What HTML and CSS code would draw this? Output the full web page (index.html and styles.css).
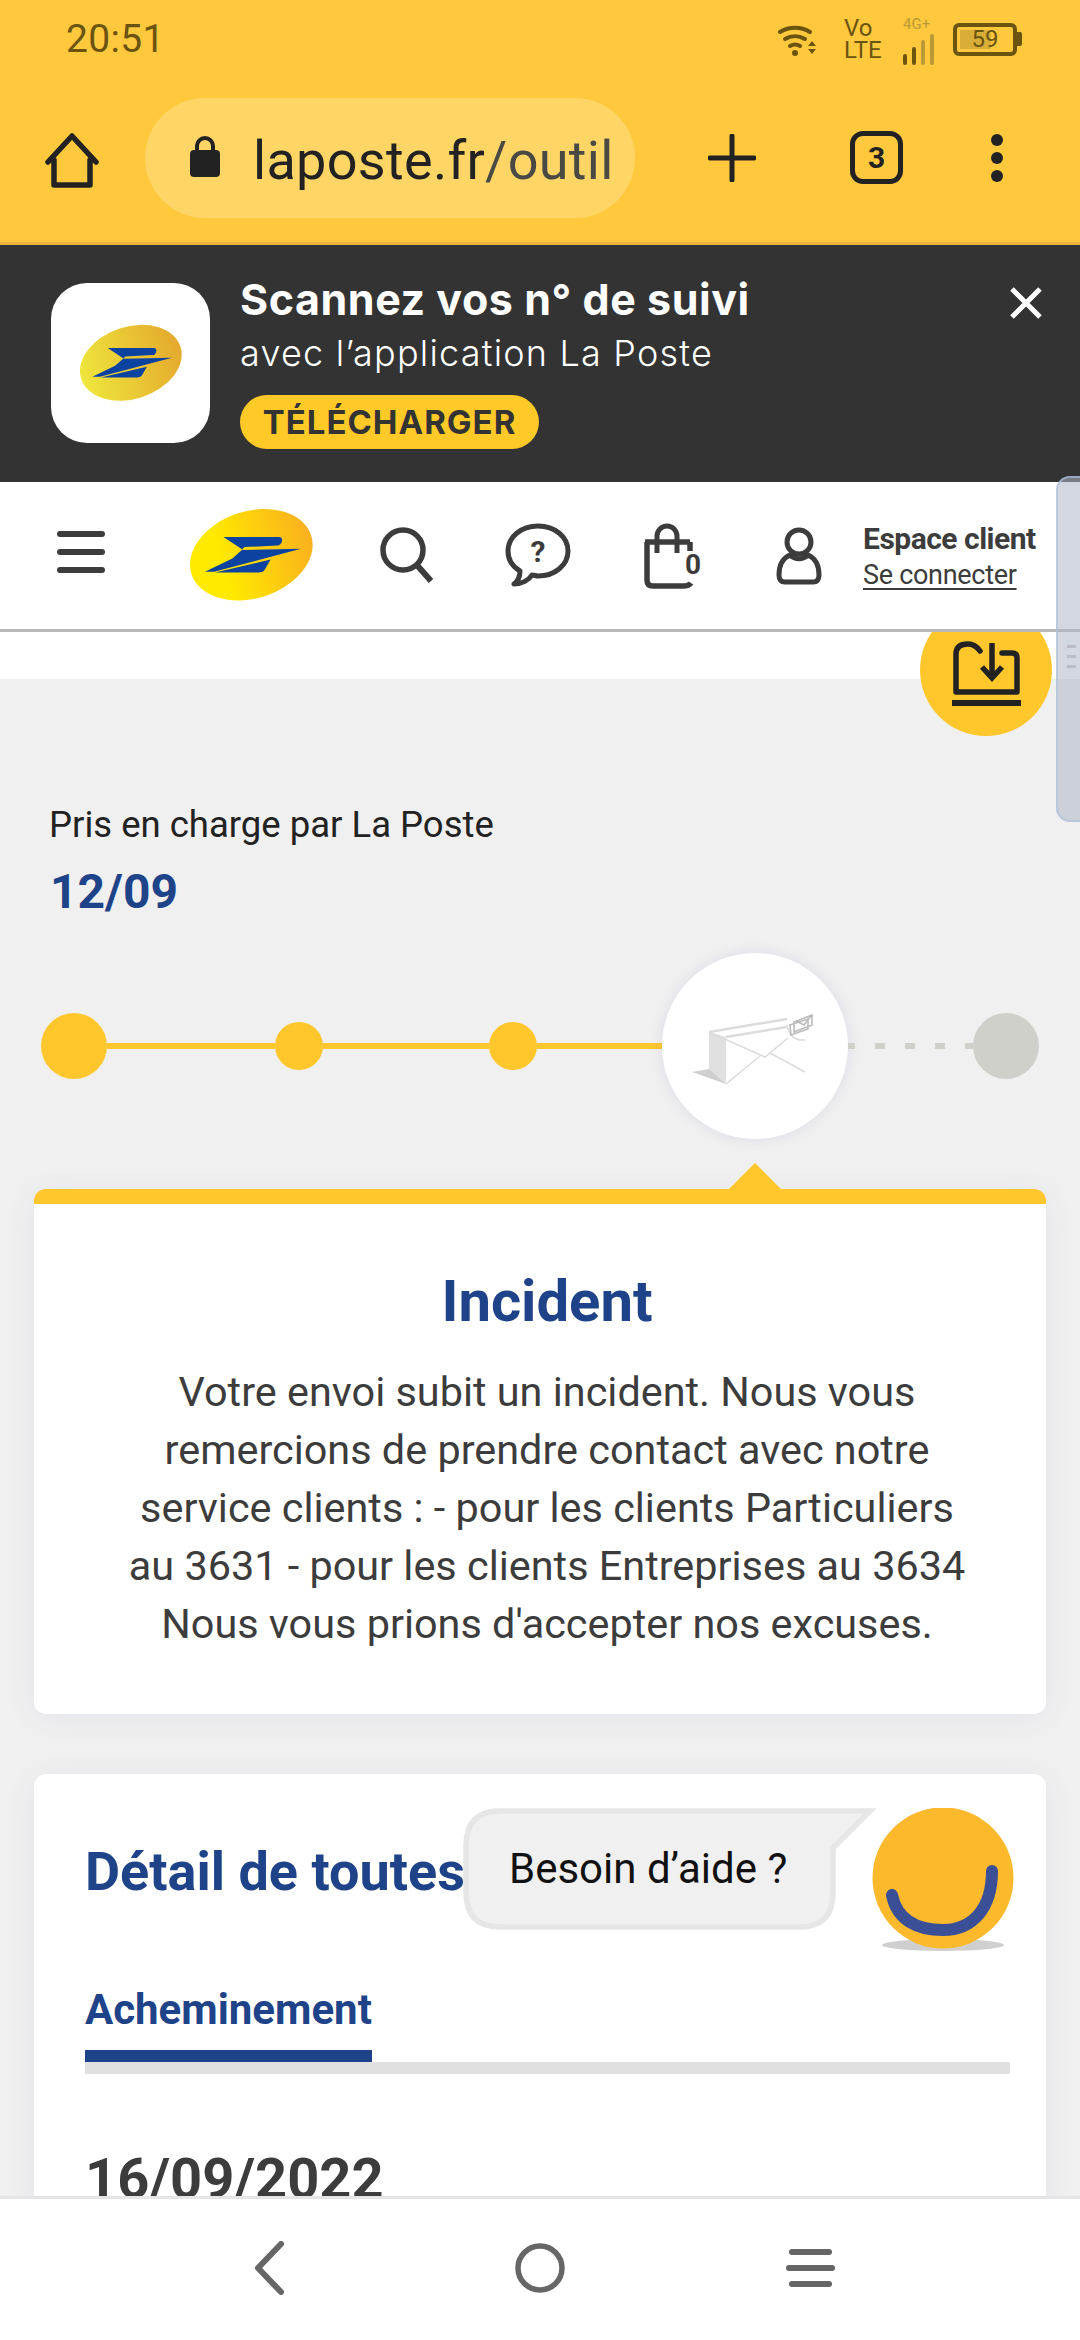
FILE: index.html
```html
<!DOCTYPE html>
<html lang="fr">
<head>
<meta charset="utf-8">
<title>La Poste</title>
<link rel="stylesheet" href="styles.css">
</head>
<body>
<svg width="0" height="0" class="defs">
  <defs>
    <linearGradient id="lg1" x1="0" y1="0" x2="1" y2="0"><stop offset="0.25" stop-color="#ffea00"/><stop offset="1" stop-color="#fab01e"/></linearGradient>
    <linearGradient id="lg2" x1="0" y1="0" x2="1" y2="0"><stop offset="0" stop-color="#efe63c"/><stop offset="1" stop-color="#e4a92e"/></linearGradient>
  </defs>
</svg>
<div class="page">
  <div class="chrome">
    <div class="status">
      <span class="time">20:51</span>
      <div class="status-icons">
        <svg class="wifi" viewBox="0 0 40 34" width="40" height="34"><g fill="none" stroke="#6b5410" stroke-width="4" stroke-linecap="round"><path d="M2 10A29 29 0 0 1 32 10"/><path d="M7 17A19 19 0 0 1 27 17"/><path d="M12 24A10 10 0 0 1 22 24"/></g><circle cx="17" cy="31" r="3" fill="#6b5410"/><path d="M30 24l4-5 4 5zM30 27h8l-4 5z" fill="#6b5410"/></svg>
        <div class="volte">Vo<br>LTE</div>
        <div class="signal"><span class="g4">4G+</span>
          <svg viewBox="0 0 32 32" width="32" height="32"><rect x="0" y="20" width="4" height="11" rx="2" fill="#6b5410"/><rect x="9" y="13" width="4" height="18" rx="2" fill="#6b5410"/><rect x="18" y="6" width="4" height="25" rx="2" fill="#b99a35"/><rect x="27" y="0" width="4" height="31" rx="2" fill="#b99a35"/></svg>
        </div>
        <div class="battery"><div class="battery-fill"></div><span class="battery-num">59</span></div><div class="battery-nub"></div>
      </div>
    </div>
    <div class="toolbar">
      <svg class="home" viewBox="0 0 60 60" width="60" height="60"><path d="M6 32L30 6L54 32M12 30V55H48V30" fill="none" stroke="#222" stroke-width="5.5" stroke-linejoin="round" stroke-linecap="round"/></svg>
      <div class="url">
        <svg viewBox="0 0 34 44" width="34" height="44"><path d="M9 17V11a8 8 0 0 1 16 0v6" fill="none" stroke="#222" stroke-width="4"/><rect x="2" y="15" width="30" height="27" rx="4" fill="#222"/></svg>
        <span class="url-text">laposte.fr<span class="url-path">/outil</span></span>
      </div>
      <svg class="plus" viewBox="0 0 48 48" width="48" height="48"><path d="M24 2V46M2 24H46" stroke="#222" stroke-width="5" stroke-linecap="round"/></svg>
      <div class="tabs">3</div>
      <div class="more"><i></i><i></i><i></i></div>
    </div>
  </div>

  <div class="banner">
    <div class="app-icon">
      <svg viewBox="0 0 102 78" width="102" height="78"><g transform="scale(.3344)"><ellipse cx="152" cy="116" rx="156" ry="108" transform="rotate(-18 152 116)" fill="url(#lg2)"/><path d="M83 72H220Q230 72 228 82Q226 93 216 93L135 97Q131 102 128 104L275 101L60 158H37L105 125L130 103Z" fill="#0c42a0"/><path d="M200 128L186 152Q182 160 170 160H62Z" fill="#0c42a0"/></g></svg>
    </div>
    <div class="banner-text">
      <div class="banner-title">Scannez vos n° de suivi</div>
      <div class="banner-sub">avec l’application La Poste</div>
      <div class="banner-btn">TÉLÉCHARGER</div>
    </div>
    <svg class="close" viewBox="0 0 34 34" width="34" height="34"><path d="M3 3L31 31M31 3L3 31" stroke="#fff" stroke-width="5"/></svg>
  </div>

  <header class="site-header">
    <div class="burger"><i></i><i></i><i></i></div>
    <svg class="logo" viewBox="0 0 123 94" width="123" height="94"><g transform="scale(.4033)"><ellipse cx="152" cy="116" rx="156" ry="108" transform="rotate(-18 152 116)" fill="url(#lg1)"/><path d="M83 72H220Q230 72 228 82Q226 93 216 93L135 97Q131 102 128 104L275 101L60 158H37L105 125L130 103Z" fill="#0c42a0"/><path d="M200 128L186 152Q182 160 170 160H62Z" fill="#0c42a0"/></g></svg>
    <svg class="ic-search" viewBox="0 0 56 56" width="56" height="56"><circle cx="25" cy="23" r="20" fill="none" stroke="#3c3c3c" stroke-width="5.5"/><path d="M38 37L53 54" stroke="#3c3c3c" stroke-width="6"/></svg>
    <svg class="ic-chat" viewBox="0 0 66 64" width="66" height="64"><path d="M33 3C16 3 3 14 3 28C3 37 8 44 15 48C15 53 13 58 9 61C17 61 24 57 27 52C29 52 31 53 33 53C50 53 63 42 63 28C63 14 50 3 33 3Z" fill="none" stroke="#3c3c3c" stroke-width="5" stroke-linejoin="round"/><text x="33" y="39" class="chat-q">?</text></svg>
    <svg class="ic-bag" viewBox="0 0 64 66" width="64" height="66"><path d="M3 19H48M5 19V57Q5 63 11 63H41Q47 63 49 60M48 19V28" fill="none" stroke="#3c3c3c" stroke-width="5.5"/><path d="M15 30V13a10 10 0 0 1 20 0V30" fill="none" stroke="#3c3c3c" stroke-width="5"/><text x="51" y="51" class="bag-n">0</text></svg>
    <svg class="ic-user" viewBox="0 0 46 58" width="46" height="58"><circle cx="23" cy="15" r="12" fill="none" stroke="#3c3c3c" stroke-width="5"/><path d="M14 28C7 31 3 38 3 48Q3 55 9 55H37Q43 55 43 48C43 38 39 31 32 28C27 33 19 33 14 28Z" fill="none" stroke="#3c3c3c" stroke-width="5" stroke-linejoin="round"/></svg>
    <div class="account">
      <div class="account-title">Espace client</div>
      <div class="account-link">Se connecter</div>
    </div>
  </header>

  <main class="main">
    <div class="white-strip"></div>
    <div class="fab">
      <svg viewBox="0 0 132 132" width="132" height="132"><path d="M60 47Q55 40 48 40Q36 40 36 50V88H97V54Q97 49 92 49H82" fill="none" stroke="#222" stroke-width="5.5" stroke-linecap="round" stroke-linejoin="round"/><path d="M72 39V74M62 63L72 74L82 63" fill="none" stroke="#222" stroke-width="5.5"/><rect x="32" y="96" width="69" height="6" fill="#222"/></svg>
    </div>
    <section class="summary">
      <div class="summary-label">Pris en charge par La Poste</div>
      <div class="summary-date">12/09</div>
      <div class="timeline">
        <span class="dot dot-lg"></span><span class="line l1"></span>
        <span class="dot"></span><span class="line l2"></span>
        <span class="dot"></span><span class="line l3"></span>
        <span class="step-current">
          <svg viewBox="0 0 186 186" width="186" height="186"><path d="M47 79L64 84V131L47 117Z" fill="#e0e0e0"/><path d="M30 119L47 116L64 131Z" fill="#cfcfcf"/><g fill="none" stroke="#dcdcdc" stroke-width="1.6"><path d="M47 79L125 66" stroke-width="2.5"/><path d="M64 84L125 74" stroke-width="2.5"/><path d="M47 79L103 104L126 85M64 131L98 103M108 100L143 119"/><path d="M125 72Q128 88 143 87"/></g><g fill="#fff" stroke="#bbb" stroke-width="1.6"><path d="M132 69L150 62V72L132 79Z"/><path d="M128 72L146 66V76L129 82Z" fill="none"/><path d="M134 68L142 72L149 63" fill="none"/></g></svg>
        </span>
        <span class="dashes"></span>
        <span class="dot dot-lg dot-off"></span>
      </div>
    </section>

    <section class="card incident">
      <h2 class="incident-title">Incident</h2>
      <p class="incident-text">Votre envoi subit un incident. Nous vous remercions de prendre contact avec notre service clients : - pour les clients Particuliers au 3631 - pour les clients Entreprises au 3634 Nous vous prions d'accepter nos excuses.</p>
    </section>

    <section class="card detail">
      <h2 class="detail-title">Détail de toutes</h2>
      <div class="tabbar"><div class="tab">Acheminement</div></div>
      <div class="detail-date">16/09/2022</div>
    </section>

    <div class="help">
      <div class="help-bubble">
        <svg viewBox="0 0 415 122" width="415" height="122"><path d="M38 3H408L371 40V84Q371 119 338 119H38Q4 119 4 84V38Q4 3 38 3Z" fill="#f0f0f0" stroke="#e6e6e6" stroke-width="5.5"/></svg>
        <span class="help-text">Besoin d’aide ?</span>
      </div>
      <svg class="smile" viewBox="0 0 142 146" width="142" height="146"><ellipse cx="71" cy="137" rx="61" ry="6" fill="#cfcfcf"/><circle cx="71" cy="70" r="70.5" fill="#fdb92c"/><path d="M20 87C25 112 45 122 71 122C101 122 120 100 120 63" fill="none" stroke="#3a4f96" stroke-width="12" stroke-linecap="round"/></svg>
    </div>
  </main>

  <nav class="nav">
    <svg viewBox="0 0 34 54" width="34" height="54"><path d="M29 3L6 27L29 51" fill="none" stroke="#666" stroke-width="6" stroke-linecap="round" stroke-linejoin="round"/></svg>
    <svg viewBox="0 0 54 54" width="54" height="54"><circle cx="27" cy="27" r="22" fill="none" stroke="#666" stroke-width="5.5"/></svg>
    <div class="nav-menu"><i></i><i></i><i></i></div>
  </nav>

  <div class="edge-handle"><i></i><i></i><i></i></div>
</div>
</body>
</html>
```
FILE: styles.css
```css
* { box-sizing: border-box; }
html, body { margin: 0; padding: 0; }
body { font-family: Roboto, "Liberation Sans", sans-serif; background: #fff; color: #3c3c3c; }
.defs { position: absolute; }
.page { position: relative; width: 1080px; height: 2340px; overflow: hidden; display: flex; flex-direction: column; }

/* browser chrome */
.chrome { height: 245px; background: #ffc83d; border-bottom: 3px solid #e8b53a; flex: none; }
.status { height: 78px; padding: 0 0 0 66px; display: flex; justify-content: space-between; align-items: center; color: #6b5410; }
.time { font-size: 39px; font-weight: 400; letter-spacing: .3px; }
.status-icons { display: flex; align-items: center; padding-right: 58px; height: 78px; }
.wifi { margin-right: 26px; }
.volte { font-size: 24px; line-height: 22px; margin-right: 19px; width: 40px; }
.signal { position: relative; width: 32px; height: 50px; padding-top: 20px; margin-right: 18px; }
.g4 { position: absolute; top: 2px; left: 0; font-size: 15px; line-height: 16px; color: #b99a35; }
.battery { position: relative; width: 64px; height: 33px; border: 4px solid #6b5410; border-radius: 6px; display: flex; align-items: center; justify-content: center; font-size: 24px; }
.battery-fill { position: absolute; left: 3px; top: 3px; bottom: 3px; width: 31px; background: #d9ae38; }
.battery-num { position: relative; }
.battery-nub { width: 5px; height: 14px; background: #6b5410; border-radius: 0 2px 2px 0; }
.toolbar { height: 164px; display: flex; align-items: flex-start; position: relative; }
.home { margin: 52px 0 0 42px; flex: none; }
.url { margin: 20px 0 0 43px; width: 490px; height: 120px; border-radius: 60px; background: #ffd666; display: flex; align-items: center; padding-left: 43px; gap: 31px; flex: none; overflow: hidden; }
.url svg { flex: none; margin-top: -2px; }
.url-text { font-size: 54px; color: #222; white-space: nowrap; letter-spacing: .3px; position: relative; top: 2px; }
.url-path { color: #4a4a44; }
.plus { margin: 56px 0 0 73px; flex: none; }
.tabs { margin: 53px 0 0 94px; width: 53px; height: 53px; border: 5px solid #222; border-radius: 13px; display: flex; align-items: center; justify-content: center; font-weight: 700; font-size: 30px; color: #222; flex: none; }
.more { margin: 56px 0 0 88px; display: flex; flex-direction: column; gap: 6px; flex: none; }
.more i { width: 12px; height: 12px; border-radius: 50%; background: #222; display: block; }

/* app banner */
.banner { height: 237px; flex: none; background: #333; display: flex; position: relative; padding: 38px 0 0 51px; }
.app-icon { width: 159px; height: 160px; border-radius: 36px; background: #fff; display: flex; align-items: center; justify-content: center; flex: none; }
.banner-text { margin-left: 30px; margin-top: -26px; font-family: Inter, "Liberation Sans", sans-serif; }
.banner-title { font-size: 43px; line-height: 56px; margin-top: 14px; font-weight: 700; color: #fff; letter-spacing: .55px; white-space: nowrap; }
.banner-sub { font-size: 36px; line-height: 42px; margin-top: 5px; font-weight: 300; color: #fff; letter-spacing: 1.2px; white-space: nowrap; }
.banner-btn { margin-top: 21px; width: 299px; height: 54px; border-radius: 27px; background: #ffc928; color: #333; font-weight: 700; font-size: 33px; line-height: 54px; text-align: center; white-space: nowrap; letter-spacing: 1px; }
.close { position: absolute; left: 1009px; top: 41px; display: block; }

/* site header */
.site-header { height: 150px; flex: none; position: relative; z-index: 2; background: #fff; border-bottom: 3px solid #b8b8b8; display: flex; align-items: flex-start; }
.burger { margin: 49px 0 0 57px; width: 48px; display: flex; flex-direction: column; gap: 12px; flex: none; }
.burger i { height: 6px; border-radius: 3px; background: #3c3c3c; display: block; }
.logo { margin: 26px 0 0 85px; flex: none; }
.ic-search { margin: 45px 0 0 65px; flex: none; }
.ic-chat { margin: 41px 0 0 71px; flex: none; }
.chat-q { font: 700 30px Roboto, sans-serif; fill: #3c3c3c; text-anchor: middle; }
.ic-bag { margin: 41px 0 0 71px; flex: none; }
.bag-n { font: 700 28px Roboto, sans-serif; fill: #3c3c3c; text-anchor: middle; }
.ic-user { margin: 45px 0 0 70px; flex: none; }
.account { margin: 38px 0 0 41px; white-space: nowrap; }
.account-title { font-size: 30px; line-height: 38px; font-weight: 700; letter-spacing: -.5px; }
.account-link { font-size: 27px; line-height: 34px; text-decoration: underline; text-underline-offset: 4px; letter-spacing: -.3px; }

/* content */
.main { flex: 1; position: relative; overflow: hidden; background: #f0f0f0; min-height: 0; }
.white-strip { height: 47px; background: #fff; }
.fab { position: absolute; left: 920px; top: -28px; width: 132px; height: 132px; border-radius: 50%; background: #ffc72c; }
.summary { padding: 124px 0 0; }
.summary-label { font-size: 36.5px; line-height: 44px; color: #222; padding-left: 49px; }
.summary-date { margin-top: 17px; padding-left: 50px; font-size: 48px; line-height: 56px; font-weight: 700; color: #1f4389; }
.timeline { margin-top: 33px; padding-left: 41px; height: 186px; display: flex; align-items: center; }
.dot { width: 48px; height: 48px; border-radius: 50%; background: #ffc72c; flex: none; }
.dot-lg { width: 66px; height: 66px; }
.dot-off { background: #cfd0ca; }
.line { height: 6px; background: #ffc72c; flex: none; }
.l1 { width: 168px; }
.l2 { width: 166px; }
.l3 { width: 125px; }
.step-current { width: 186px; height: 186px; border-radius: 50%; background: #fff; box-shadow: 0 0 14px rgba(70,80,170,.12); flex: none; display: block; }
.step-current svg { display: block; }
.dashes { width: 125px; height: 6px; flex: none; background: repeating-linear-gradient(90deg, #cfd0ca 0 7px, transparent 7px 27px, #cfd0ca 27px 30px); }

.card { position: relative; margin: 0 34px; background: #fff; border-radius: 12px; box-shadow: 0 4px 30px rgba(70,80,170,.07); }
.incident { margin-top: 50px; height: 525px; border-top: 15px solid #ffc72c; padding: 66px 69px 0 83px; text-align: center; }
.incident::before { content: ""; position: absolute; left: 695px; top: -41px; border-left: 26px solid transparent; border-right: 26px solid transparent; border-bottom: 26px solid #ffc72c; }
.incident-title { margin: 0; font-size: 58px; line-height: 60px; font-weight: 700; color: #1f4389; position: relative; top: 1px; }
.incident-text { margin: 33px 0 0; font-size: 41.4px; line-height: 58px; color: #3c3c3c; }
.detail { margin-top: 60px; height: 500px; padding: 68px 36px 0 51px; overflow: hidden; }
.detail-title { margin: 0; font-size: 54px; line-height: 60px; font-weight: 700; color: #1f4389; white-space: nowrap; }
.tabbar { margin-top: 83px; border-bottom: 12px solid #e0e0e0; display: flex; }
.tab { font-size: 42px; line-height: 50px; font-weight: 700; color: #1f4389; padding-bottom: 15px; border-bottom: 12px solid #1f4389; margin-bottom: 0; white-space: nowrap; }
.detail-date { margin-top: 73px; font-size: 56px; line-height: 64px; font-weight: 700; color: #3c3c3c; }

/* help bubble overlay */
.help { position: absolute; left: 462px; top: 1176px; display: flex; }
.help-bubble { position: relative; width: 415px; height: 122px; flex: none; }
.help-bubble svg { display: block; }
.help-text { position: absolute; left: 47px; top: 39px; font-size: 42px; line-height: 44px; color: #111; white-space: nowrap; }
.smile { margin-left: -5px; flex: none; display: block; }

/* system nav */
.nav { height: 144px; flex: none; background: #fff; border-top: 3px solid #e5e5e5; display: flex; align-items: center; position: relative; z-index: 2; padding-left: 252px; }
.nav svg { position: relative; top: -2px; }
.nav svg:nth-child(2) { margin-left: 227px; }
.nav-menu { margin-left: 220px; width: 47px; display: flex; flex-direction: column; gap: 10px; position: relative; top: -2px; }
.nav-menu i { display: block; height: 6px; background: #666; border-radius: 3px; }
.nav-menu i:nth-child(2) { margin: 0 -1px; }
.nav-menu i:nth-child(1), .nav-menu i:nth-child(3) { margin: 0 2px; }

/* edge handle */
.edge-handle { position: absolute; left: 1056px; top: 476px; width: 24px; height: 346px; border-radius: 14px 0 0 14px; background: rgba(175,182,198,.55); border: 2px solid rgba(175,192,225,.65); border-right: 0; z-index: 3; padding: 167px 0 0 9px; display: flex; flex-direction: column; gap: 7px; }
.edge-handle i { display: block; width: 9px; height: 3px; background: #bcbcc4; }
```
